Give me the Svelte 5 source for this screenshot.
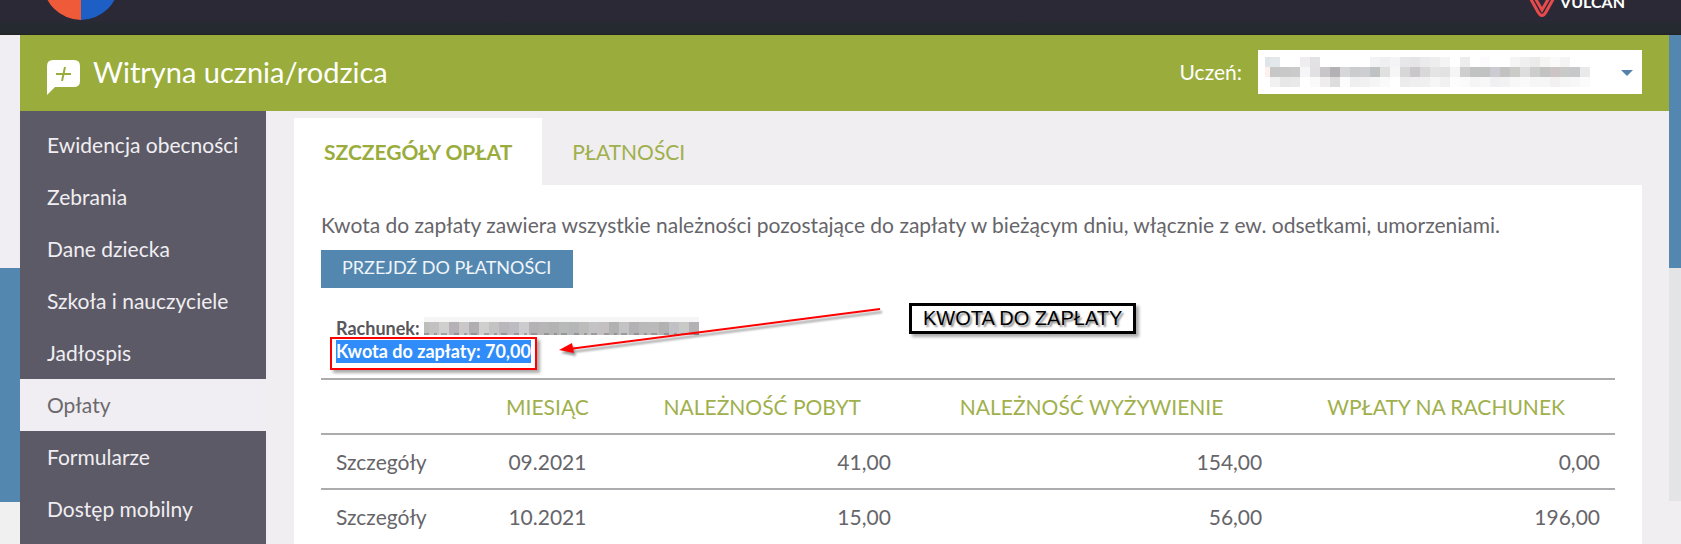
<script lang="ts">
  const menu = [
    'Ewidencja obecności',
    'Zebrania',
    'Dane dziecka',
    'Szkoła i nauczyciele',
    'Jadłospis',
    'Opłaty',
    'Formularze',
    'Dostęp mobilny'
  ];
  const tabs = ['SZCZEGÓŁY OPŁAT', 'PŁATNOŚCI'];
  const rows = [
    { month: '09.2021', stay: '41,00', food: '154,00', paid: '0,00' },
    { month: '10.2021', stay: '15,00', food: '56,00', paid: '196,00' }
  ];

  let active = $state('Opłaty');
  let tab = $state(tabs[0]);

  // redacted values: one colour per 10px cell, '-' is an empty cell
  const pupilMask = [
    'e0e6e8 e3e8ea - - efedf0 e2e1e4 - - - - - f3f2f5 efeef0 f4f3f5 e7e6e8 e5e4e6 ebeaec efeeee f4f4f4 - ededed - fcfafc - - f5f5f5 eeefee ecebec f5f5f3 fafafa f4f4f4 - -',
    'fdf0ef c6c8c7 c8c8c8 cacaca f6f5f7 e1e1e4 c8c6c8 b3b1b4 d7d7d8 cbcccd cecdd1 bfc2c3 e0e1df f6f6f7 d8d7d8 c9c7c9 d8d8d9 e4e4e4 e2e2e2 f5f5f5 cecece c1c3c3 c1c3c3 cccbd1 c3c1c2 cbcbc7 dddddd cbcecd c4c3c3 cdc5c5 c8c9c9 c6c8c9 e9e9e9',
    '- f1f1f1 e7e7e7 e9e9e9 - fafafa f0edef dddddd fcfcfc efefef f1f1f1 f5f5f5 fafafa - ececed efeff0 f1f0f1 f6f6f6 f1f1f1 fdfdfd fbfbfb f5f5f5 f8f8f8 f0f0f2 f2f2f3 f8f8f8 fafafa f6f6f6 f6f6f6 f3f0f2 f5f5f5 f7f7f7 fbfbfb'
  ].map((line) => line.split(' '));
  const accountMask =
    'bdbdb9 c2c0c1 cfcfce b5b1b6 c9c7c7 b1aeb2 cfcfcd c4c3c4 b9b7b9 bcbcc2 ccccce b5b2b5 b7b6b7 b4b3b4 b8b9b9 b6b6b9 bcbcbb c2c2c7 c4bfc1 b2b1b2 c3c3c5 b3b1b3 b9b9b9 bcb9ba b2b2b2 c0c0c5 c9c9c8 b3b1b4'.split(' ');
</script>

<div class="page">
  <header class="topbar">
    <svg class="emblem" width="76" height="20" viewBox="0 0 76 20" aria-hidden="true">
      <path d="M38 20A38 38 0 0 1 0-18H38Z" fill="#ef5a38" />
      <path d="M38 20A38 38 0 0 0 76-18H38Z" fill="#1d5fc4" />
    </svg>
    <div class="vulcan">
      <svg width="28" height="18" viewBox="0 0 28 18" fill="none" stroke="#e94b4c" aria-hidden="true">
        <path d="M0-6L10 12Q14 19 18 12L28-6" stroke-width="3" />
        <path d="M6-4L14 10L22-4" stroke-width="3" />
      </svg>
      <span>VULCAN</span>
    </div>
  </header>

  <div class="stage">
    <div class="side left"></div>
    <div class="portal">
      <div class="banner">
        <svg width="33" height="36" viewBox="0 0 33 36" aria-hidden="true">
          <path d="M6 0H27Q33 0 33 6V21Q33 27 27 27H8L0 35V6Q0 0 6 0Z" fill="#fff" />
          <path d="M9 14H24M18 7L15 21" stroke="#9aad3c" stroke-width="2" />
        </svg>
        <h1>Witryna ucznia/rodzica</h1>
        <label for="pupil">Uczeń:</label>
        <div class="picker">
          <select id="pupil"><option></option></select>
          <svg class="mask" width="325" height="30" viewBox="5 0 325 30" shape-rendering="crispEdges" aria-hidden="true">
            {#each pupilMask as line, y}
              {#each line as cell, x}
                {#if cell !== '-'}
                  <rect x={x * 10} y={y * 10} width="10" height="10" fill="#{cell}" />
                {/if}
              {/each}
            {/each}
          </svg>
          <svg class="caret" width="12" height="6" viewBox="0 0 12 6" aria-hidden="true">
            <path d="M0 0H12L6 6Z" fill="#5582ab" />
          </svg>
        </div>
      </div>

      <div class="body">
        <nav>
          {#each menu as item}
            <a href="#menu" class:active={item === active} onclick={() => (active = item)}>{item}</a>
          {/each}
        </nav>

        <main>
          <div class="tabs">
            {#each tabs as name}
              <button type="button" class:on={name === tab} onclick={() => (tab = name)}>{name}</button>
            {/each}
          </div>

          <section class="panel">
            <p>
              Kwota do zapłaty zawiera wszystkie należności pozostające do zapłaty w bieżącym dniu, włącznie z ew.
              odsetkami, umorzeniami.
            </p>
            <button type="button" class="pay">PRZEJDŹ DO PŁATNOŚCI</button>

            <div class="account">
              <div class="line">
                Rachunek:
                <svg width="275" height="18" viewBox="0 0 275 18" shape-rendering="crispEdges" aria-hidden="true">
                  <rect width="275" height="5" fill="#f5f5f6" />
                  {#each accountMask as cell, x}
                    <rect x={x * 10 - 5} y="5" width="10" height="13" fill="#{cell}" />
                  {/each}
                  <path d="M0 17H275" stroke="#77757a" stroke-width="2" stroke-dasharray="5 5 3 4 6 7" opacity="0.5" />
                </svg>
              </div>
              <div class="line"><mark>Kwota do zapłaty: 70,00</mark></div>
              <div class="frame"></div>
              <svg class="arrow" width="326" height="52" viewBox="0 0 326 52" aria-hidden="true">
                <path d="M10 43L321 3" stroke="#f00" stroke-width="2" />
                <path d="M0 44L13 37L15 47Z" fill="#f00" />
              </svg>
              <div class="note">KWOTA DO ZAPŁATY</div>
            </div>

            <table>
              <colgroup>
                <col style="width: 12%" />
                <col style="width: 11%" />
                <col style="width: 22.2%" />
                <col style="width: 28.7%" />
                <col style="width: 26.1%" />
              </colgroup>
              <thead>
                <tr>
                  <th></th>
                  <th>MIESIĄC</th>
                  <th>NALEŻNOŚĆ POBYT</th>
                  <th>NALEŻNOŚĆ WYŻYWIENIE</th>
                  <th>WPŁATY NA RACHUNEK</th>
                </tr>
              </thead>
              <tbody>
                {#each rows as row}
                  <tr>
                    <td><a href="#details">Szczegóły</a></td>
                    <td class="month">{row.month}</td>
                    <td class="sum">{row.stay}</td>
                    <td class="sum">{row.food}</td>
                    <td class="sum">{row.paid}</td>
                  </tr>
                {/each}
              </tbody>
            </table>
          </section>
        </main>
      </div>
    </div>
    <div class="side right"></div>
  </div>
</div>

<style>
  :global(body) { margin: 0; }
  .page {
    display: flex;
    flex-direction: column;
    min-height: 100vh;
    background: #f0eef1;
    color: #66656a;
    font: 21px/32px Lato, "Noto Sans", sans-serif;
  }
  a { color: inherit; text-decoration: none; }
  button, select { font: inherit; border: 0; cursor: pointer; }

  .topbar {
    display: flex;
    justify-content: space-between;
    align-items: flex-start;
    height: 35px;
    padding: 0 56px 0 43px;
    box-sizing: border-box;
    overflow: hidden;
    background: linear-gradient(#2b2936 20px, #252a31 24px 33px, #20231f);
  }
  .vulcan { display: flex; gap: 4px; }
  .vulcan span {
    color: #fff;
    font-size: 16px;
    font-weight: 700;
    line-height: 16px;
    margin-top: -6px;
  }

  .stage {
    display: grid;
    grid-template-columns: 20px 1fr 12px;
    flex: 1;
  }
  .left { background: linear-gradient(#f0eef2 233px, #5387b0 233px 467px, #f1f0f0 467px); }
  .right { background: linear-gradient(#5387b0 233px, #e4e3e5 233px 466px, #f1eef2 466px); }
  .portal { display: flex; flex-direction: column; }

  .banner {
    display: flex;
    align-items: center;
    height: 76px;
    padding: 0 27px 2px;
    box-sizing: border-box;
    background: #9aad3c;
    color: #fff;
  }
  .banner > svg { margin-top: 12px; }
  h1 {
    flex: 1;
    margin: 0 0 0 13px;
    font-size: 29px;
    font-weight: 400;
  }
  label { margin-right: 16px; }
  .picker { position: relative; width: 384px; }
  select {
    display: block;
    width: 100%;
    height: 44px;
    padding: 0 32px 0 8px;
    border-radius: 0;
    background: #fff;
    appearance: none;
  }
  .mask, .caret { position: absolute; pointer-events: none; }
  .mask { left: 7px; top: 7px; }
  .caret { right: 9px; top: 20px; }

  .body { display: flex; flex: 1; }
  nav {
    width: 246px;
    padding-top: 8px;
    box-sizing: border-box;
    background: #5c5a66;
  }
  nav a {
    display: block;
    padding-left: 27px;
    line-height: 52px;
    color: #f0eef2;
  }
  nav a.active { background: #f0eef2; color: #6b696c; }

  main {
    display: flex;
    flex-direction: column;
    flex: 1;
    padding: 7px 27px 0 28px;
  }
  .tabs { display: flex; }
  .tabs button {
    height: 67px;
    padding: 0 30px;
    background: none;
    color: #9fb04c;
  }
  .tabs .on {
    background: #fff;
    color: #9aad3c;
    font-weight: 700;
  }

  .panel {
    flex: 1;
    padding: 24px 27px 0;
    background: #fff;
  }
  p { margin: 0 0 9px; }
  .pay {
    display: block;
    height: 38px;
    padding: 0 22px 4px 21px;
    background: #5387b0;
    color: #f0f5fa;
    font-size: 18px;
  }

  .account {
    position: relative;
    margin: 29px 0 15px;
    padding-left: 15px;
    color: #57565b;
    font-size: 18px;
    font-weight: 700;
    line-height: 23px;
  }
  .line { display: flex; gap: 4px; }
  mark { background: #2f8cf8; color: #fff; }
  .frame, .arrow, .note { position: absolute; }
  .frame {
    left: 9px;
    top: 20px;
    width: 203px;
    height: 29px;
    border: 2px solid #f00;
    box-shadow: 3px 3px 3px #0005;
  }
  .arrow {
    left: 238px;
    top: -11px;
    filter: drop-shadow(2px 3px 1px #0006);
  }
  .note {
    left: 588px;
    top: -14px;
    padding: 0 11px;
    border: 3px solid #000;
    color: #000;
    font: 20px/25px "Liberation Sans", Arial, sans-serif;
    text-shadow: 2px 2px 2px #0007;
    box-shadow: 3px 3px 3px #0005;
  }

  table {
    width: 100%;
    table-layout: fixed;
    border-collapse: collapse;
  }
  th, td {
    height: 53px;
    padding: 0 15px;
    border-top: 2px solid #acabad;
  }
  th {
    color: #9fb04c;
    font-weight: 400;
    white-space: nowrap;
  }
  .month { text-align: center; }
  .sum { text-align: right; }
</style>
